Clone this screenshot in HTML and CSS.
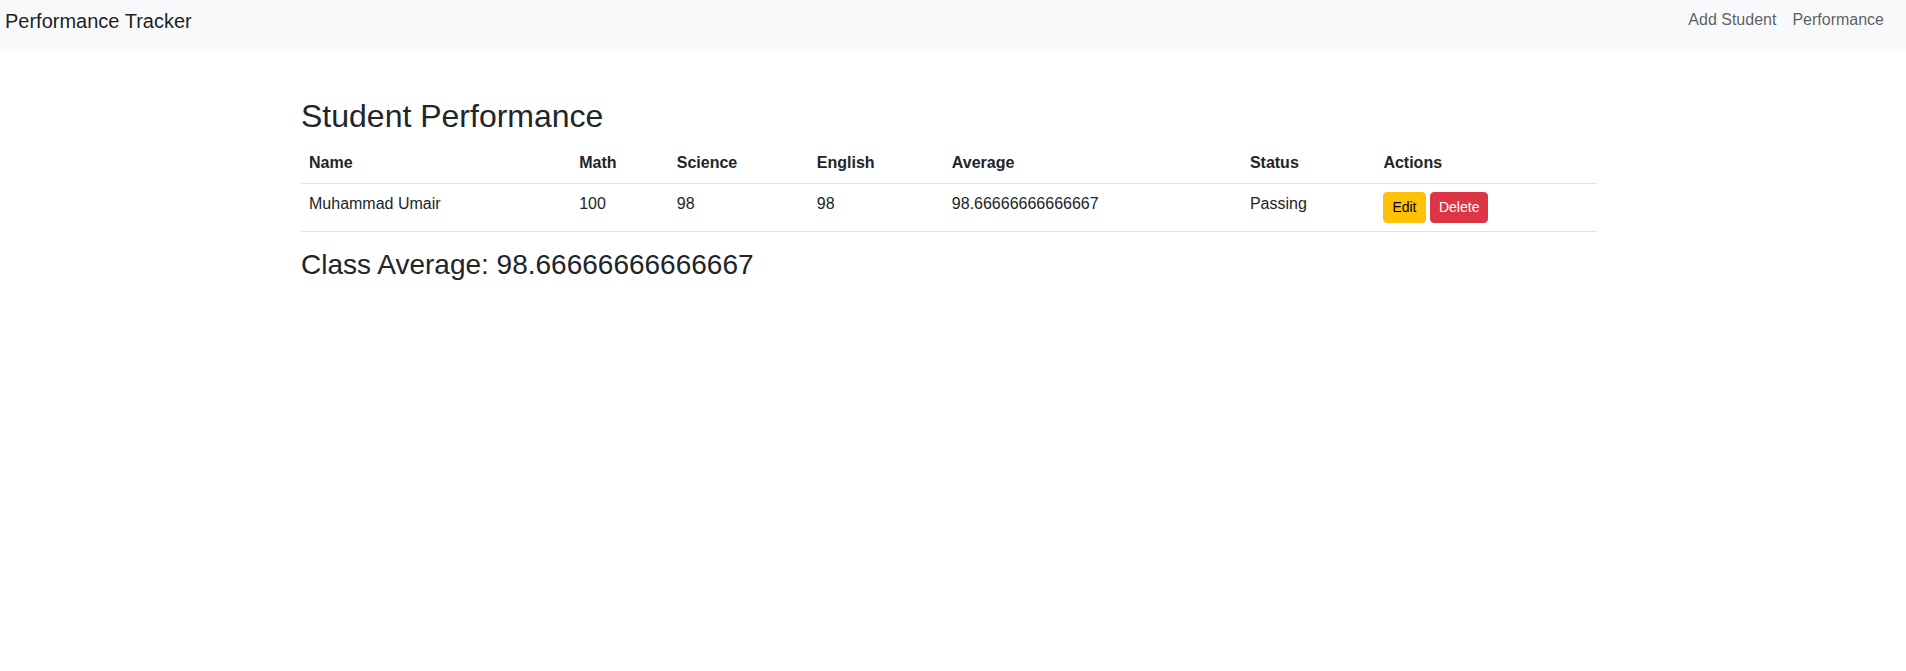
FILE: index.html
```html
<!DOCTYPE html>
<html lang="en">
<head>
<meta charset="utf-8">
<title>Performance Tracker</title>
<link rel="stylesheet" href="styles.css">
</head>
<body>
<nav class="navbar">
  <a class="brand" href="#">Performance Tracker</a>
  <ul class="nav">
    <li><a class="nav-link" href="#">Add Student</a></li>
    <li><a class="nav-link" href="#">Performance</a></li>
  </ul>
</nav>
<div class="page">
  <main class="container">
    <h2 class="title">Student Performance</h2>
    <table class="table">
      <thead>
        <tr>
          <th>Name</th>
          <th>Math</th>
          <th>Science</th>
          <th>English</th>
          <th>Average</th>
          <th>Status</th>
          <th>Actions</th>
        </tr>
      </thead>
      <tbody>
        <tr>
          <td>Muhammad Umair</td>
          <td>100</td>
          <td>98</td>
          <td>98</td>
          <td>98.66666666666667</td>
          <td>Passing</td>
          <td><button class="btn btn-warning">Edit</button> <button class="btn btn-danger">Delete</button></td>
        </tr>
      </tbody>
    </table>
    <h3 class="avg">Class Average: 98.66666666666667</h3>
  </main>
</div>
</body>
</html>
```
FILE: styles.css
```css
* { box-sizing: border-box; }
html, body { margin: 0; padding: 0; }
body {
  font-family: "Liberation Sans", Arial, sans-serif;
  font-size: 16px;
  line-height: 1.5;
  color: #212529;
  background: #fff;
}
a { text-decoration: none; }
.navbar {
  display: flex;
  justify-content: space-between;
  align-items: flex-start;
  height: 49px;
  background: #f8f9fa;
  padding: 0 14px 0 5px;
}
.brand {
  font-size: 20px;
  line-height: 30px;
  margin-top: 6px;
  color: rgba(0,0,0,0.9);
}
.nav {
  display: flex;
  list-style: none;
  margin: 0;
  padding: 0;
  margin-top: 8px;
}
.nav-link {
  display: block;
  padding: 0 8px;
  line-height: 24px;
  color: rgba(0,0,0,0.65);
}
.page { padding-right: 8px; }
.container {
  width: 1296px;
  margin: 48px auto 0;
}
.title {
  font-size: 32px;
  font-weight: 500;
  line-height: 1.2;
  margin: 0 0 8px;
}
.table {
  width: 100%;
  border-collapse: collapse;
  margin-bottom: 16px;
}
.table th, .table td {
  padding: 8px;
  text-align: left;
  vertical-align: top;
  border-bottom: 1px solid #dee2e6;
}
.table th { font-weight: 700; }
.btn {
  font-family: inherit;
  font-size: 14px;
  line-height: 1.5;
  padding: 4px 8px;
  border: 1px solid transparent;
  border-radius: 4px;
  cursor: pointer;
}
.btn-warning { background: #ffc107; border-color: #ffc107; color: #000; }
.btn-danger { background: #dc3545; border-color: #dc3545; color: #fff; }
.avg {
  font-size: 28px;
  font-weight: 500;
  line-height: 1.2;
  margin: 0 0 8px;
}
```
